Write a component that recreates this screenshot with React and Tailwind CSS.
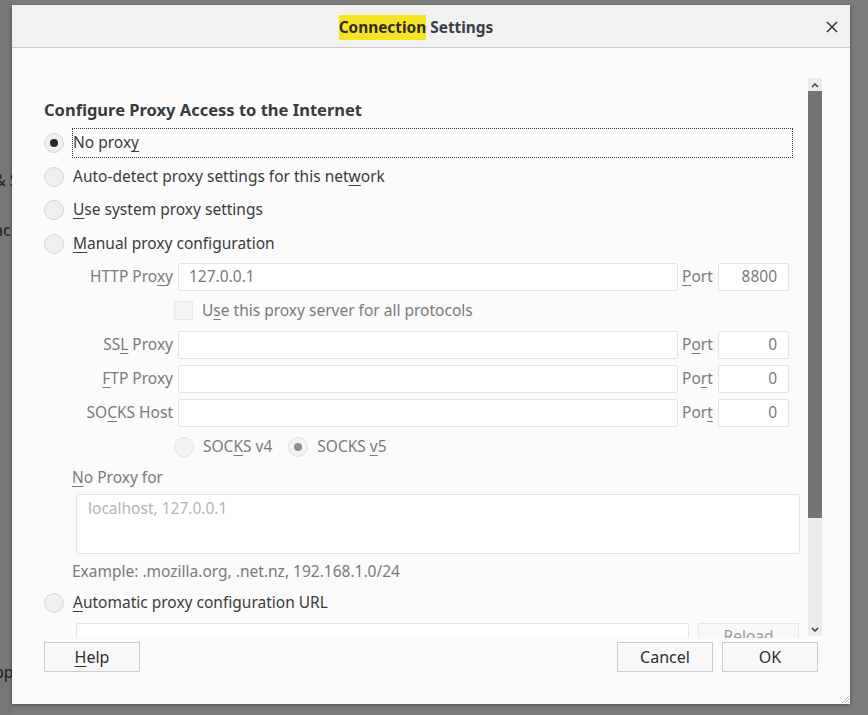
import React from 'react';

const font = { fontFamily: '"Noto Sans", "Open Sans", sans-serif' };

const U = ({ children }) => <span className="underline underline-offset-[3px] decoration-1">{children}</span>;

const Radio = ({ checked, disabled }) => (
  <span
    className={`flex h-[20px] w-[20px] shrink-0 items-center justify-center rounded-full border ${
      disabled ? 'border-[#e3e3e3] bg-[#f3f3f3]' : 'border-[#d6d6d6] bg-[#efefef]'
    }`}
  >
    {checked && <span className={`h-[8px] w-[8px] rounded-full ${disabled ? 'bg-[#8e8e8e]' : 'bg-[#2a2a2a]'}`} />}
  </span>
);

const Field = ({ value, className = '' }) => (
  <div className={`flex h-[28px] items-center rounded-[2px] border border-[#e4e4e4] bg-white px-[10px] text-[15.5px] text-[#7a7a7a] ${className}`}>
    {value}
  </div>
);

const ProxyRow = ({ label, value, port, portLabel }) => (
  <div className="flex h-[28px] items-center">
    <div className="w-[101px] whitespace-nowrap text-right text-[15.5px] text-[#7a7a7a]">{label}</div>
    <Field value={value} className="ml-[5px] w-[500px]" />
    <div className="ml-[4px] w-[31px] text-[15.5px] text-[#7a7a7a]">{portLabel}</div>
    <Field value={port} className="ml-[5px] w-[71px] justify-end pr-[11px]" />
  </div>
);

const Button = ({ children, className = '' }) => (
  <button className={`h-[30px] w-[96px] border border-[#cbcbcb] bg-[#f8f8f8] text-[16px] text-[#2e2e2e] ${className}`}>
    {children}
  </button>
);

export default function App() {
  return (
    <div className="flex h-[715px] w-[868px] overflow-hidden bg-[#7b7b7b]" style={font}>
      {/* page behind the dialog */}
      <div className="flex w-[12px] shrink-0 flex-col overflow-hidden bg-[#777777] text-[16px] text-[#1e1e1e]">
        <div className="mt-[168px] -ml-[6px] whitespace-nowrap">&amp; S</div>
        <div className="mt-[26px] -ml-[6px] whitespace-nowrap">ac</div>
        <div className="mt-[418px] -ml-[6px] whitespace-nowrap">pp</div>
      </div>

      <div className="relative mt-[5px] flex h-[699px] w-[838px] flex-col bg-[#fbfbfb] shadow-[0_1px_4px_rgba(0,0,0,0.35)]">
        {/* header */}
        <div className="relative flex h-[43px] shrink-0 items-center justify-center border-b border-[#c9c9c9] bg-[#f1f1f1] pr-[30px] pt-[3px]">
          <div className="text-[15.4px] font-bold text-[#3a4046]">
            <span className="bg-[#f6e51c] py-[2px] text-[#2c2c2c]">Connection</span> Settings
          </div>
          <button className="absolute right-[10px] top-[14px] flex h-[16px] w-[16px] items-center justify-center">
            <svg width="12" height="12" viewBox="0 0 12 12">
              <path d="M1 1 L11 11 M11 1 L1 11" stroke="#3a3a3a" strokeWidth="1.6" />
            </svg>
          </button>
        </div>

        {/* scrolling body */}
        <div className="mt-[30px] flex h-[560px] shrink-0">
          <div className="flex-1 overflow-hidden pl-[32px] pr-[8px] text-[#3c3c3c]">
            <div className="mt-[21px] h-[22px] whitespace-nowrap text-[16.5px] font-bold leading-[22px] text-[#363b40]">
              Configure Proxy Access to the Internet
            </div>

            <div className="mt-[7px] flex flex-col gap-[3.5px] text-[15.5px]">
              <div className="flex h-[30px] items-center">
                <Radio checked />
                <div className="ml-[8px] flex h-[30px] w-[721px] items-center border border-dotted border-[#3a3a3a]">
                  No prox<U>y</U>
                </div>
              </div>
              <div className="flex h-[30px] items-center">
                <Radio />
                <span className="ml-[9px]">Auto-detect proxy settings for this net<U>w</U>ork</span>
              </div>
              <div className="flex h-[30px] items-center">
                <Radio />
                <span className="ml-[9px]"><U>U</U>se system proxy settings</span>
              </div>
              <div className="flex h-[30px] items-center">
                <Radio />
                <span className="ml-[9px]"><U>M</U>anual proxy configuration</span>
              </div>
            </div>

            <div className="ml-[28px] mt-[4px] flex flex-col gap-[6px]">
              <ProxyRow label={<>HTTP Pro<U>x</U>y</>} value="127.0.0.1" portLabel={<><U>P</U>ort</>} port="8800" />
              <div className="flex h-[28px] items-center pl-[102px]">
                <span className="h-[19px] w-[19px] rounded-[2px] border border-[#e6e6e6] bg-[#f4f4f4]" />
                <span className="ml-[9px] text-[15.5px] text-[#7a7a7a]">U<U>s</U>e this proxy server for all protocols</span>
              </div>
              <ProxyRow label={<>SS<U>L</U> Proxy</>} value="" portLabel={<>P<U>o</U>rt</>} port="0" />
              <ProxyRow label={<><U>F</U>TP Proxy</>} value="" portLabel={<>Po<U>r</U>t</>} port="0" />
              <ProxyRow label={<>SO<U>C</U>KS Host</>} value="" portLabel={<>Por<U>t</U></>} port="0" />
              <div className="flex h-[28px] items-center pl-[102px] text-[15.5px] text-[#7a7a7a]">
                <Radio disabled />
                <span className="ml-[9px]">SOC<U>K</U>S v4</span>
                <span className="ml-[16px]"><Radio checked disabled /></span>
                <span className="ml-[9px]">SOCKS <U>v</U>5</span>
              </div>
            </div>

            <div className="ml-[28px] mt-[6px] flex h-[22px] items-center text-[15.5px] text-[#7a7a7a]">
              <U>N</U>o Proxy for
            </div>
            <div className="ml-[32px] mt-[5px] h-[60px] w-[724px] rounded-[2px] border border-[#e4e4e4] bg-white px-[11px] pt-[2px] text-[15.5px] text-[#b4b4b4]">
              localhost, 127.0.0.1
            </div>
            <div className="ml-[28px] mt-[7px] flex h-[22px] items-center text-[15.5px] text-[#7a7a7a]">
              Example: .mozilla.org, .net.nz, 192.168.1.0/24
            </div>
            <div className="mt-[5px] flex h-[30px] items-center text-[15.5px]">
              <Radio />
              <span className="ml-[9px]"><U>A</U>utomatic proxy configuration URL</span>
            </div>
            <div className="ml-[32px] mt-[5px] flex">
              <div className="h-[28px] w-[613px] rounded-[2px] border border-[#e4e4e4] bg-white" />
              <div className="ml-[9px] flex h-[28px] w-[101px] items-start justify-center border border-[#e6e6e6] bg-[#f8f8f8] pt-[1px] text-[15.5px] text-[#9a9a9a]">
                Reload
              </div>
            </div>
          </div>

          {/* scrollbar */}
          <div className="mr-[28px] flex h-[558px] w-[14px] shrink-0 flex-col bg-[#ececec]">
            <div className="flex h-[13px] items-center justify-center">
              <svg width="8" height="6" viewBox="0 0 8 6">
                <path d="M1 5 L4 2 L7 5" stroke="#333" strokeWidth="1.4" fill="none" />
              </svg>
            </div>
            <div className="h-[427px] bg-[#747474]" />
            <div className="flex-1" />
            <div className="flex h-[12px] items-center justify-center">
              <svg width="8" height="6" viewBox="0 0 8 6">
                <path d="M1 1 L4 4 L7 1" stroke="#333" strokeWidth="1.4" fill="none" />
              </svg>
            </div>
          </div>
        </div>

        {/* footer */}
        <div className="mt-[4px] flex items-start pl-[32px] pr-[32px]">
          <Button><U>H</U>elp</Button>
          <div className="flex-1" />
          <Button>Cancel</Button>
          <Button className="ml-[9px]">OK</Button>
        </div>

        <svg className="absolute bottom-[0px] right-[0px]" width="10" height="10" viewBox="0 0 10 10">
          <path d="M9 2 L2 9 M9 5 L5 9 M9 8 L8 9" stroke="#b0b0b0" strokeWidth="1" />
        </svg>
      </div>
    </div>
  );
}
